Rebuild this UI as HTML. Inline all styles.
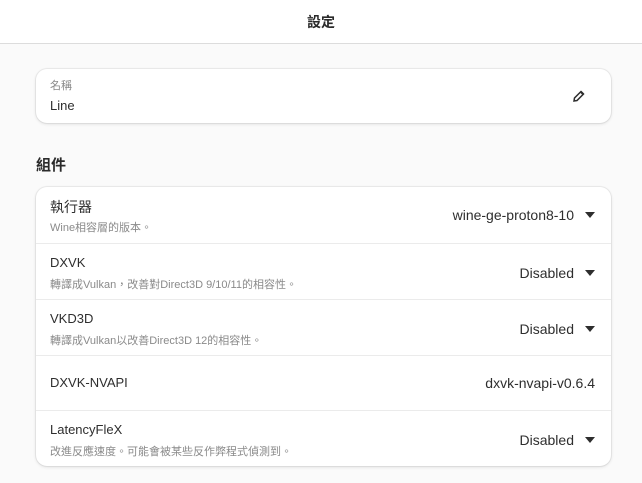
<!DOCTYPE html>
<html><head><meta charset="utf-8"><style>
*{margin:0;padding:0;box-sizing:border-box}
body{width:642px;height:483px;background:#fafafa;font-family:"Liberation Sans","Noto Sans CJK TC",sans-serif;color:#2e2e2e;position:relative;overflow:hidden}
.hdr{position:absolute;left:0;top:0;width:642px;height:44px;background:#fff;border-bottom:1px solid #dcdcdc;text-align:center;line-height:44px;font-size:14px;font-weight:bold;color:#2a2a2a}
.card{position:absolute;left:36px;width:575px;background:#fff;border-radius:11px;box-shadow:0 0 0 1px rgba(0,0,0,.05),0 1px 3px rgba(0,0,0,.12)}
.t{position:absolute;left:14px;white-space:nowrap}
.r{position:absolute;right:16px;white-space:nowrap;font-size:14px}
.sub{font-size:11px;color:#8a8a8a}
.main{font-size:13px}
.row{position:absolute;left:0;width:575px;border-top:1px solid #ebebeb}
.arr{display:inline-block;width:0;height:0;border-left:5px solid transparent;border-right:5px solid transparent;border-top:6px solid #2e2e2e;margin-left:11px;vertical-align:2px}
h2{position:absolute;left:36px;top:154px;font-size:15px;font-weight:bold;color:#2a2a2a}
</style></head><body>
<div class="hdr">設定</div>
<div class="card" style="top:69px;height:54px">
<div class="t sub" style="top:8px">名稱</div>
<div class="t main" style="top:29px">Line</div>
<svg style="position:absolute;left:536px;top:20px" width="14" height="14" viewBox="0 0 14 14"><path d="M2 12 L2.5 9 L9 2.5 L11.5 5 L5 11.5 Z" fill="none" stroke="#2e2e2e" stroke-width="1.5"/><path d="M8 3.5 L10.5 6 L12 4.5 L9.5 2 Z" fill="#2e2e2e"/></svg>
</div>
<h2>組件</h2>
<div class="card" style="top:187px;height:279px">
<div class="row" style="top:0;height:56px;border-top:none">
<div class="t" style="top:10px;font-size:14px">執行器</div>
<div class="t sub" style="top:32px">Wine相容層的版本。</div>
<div class="r" style="top:20px">wine-ge-proton8-10<span class="arr"></span></div></div>
<div class="row" style="top:56px;height:56px">
<div class="t main" style="top:11px">DXVK</div>
<div class="t sub" style="top:32px">轉譯成Vulkan，改善對Direct3D 9/10/11的相容性。</div>
<div class="r" style="top:21px">Disabled<span class="arr"></span></div></div>
<div class="row" style="top:112px;height:56px">
<div class="t main" style="top:11px">VKD3D</div>
<div class="t sub" style="top:32px">轉譯成Vulkan以改善Direct3D 12的相容性。</div>
<div class="r" style="top:21px">Disabled<span class="arr"></span></div></div>
<div class="row" style="top:168px;height:55px">
<div class="t main" style="top:19px">DXVK-NVAPI</div>
<div class="r" style="top:19px">dxvk-nvapi-v0.6.4</div></div>
<div class="row" style="top:223px;height:56px">
<div class="t main" style="top:11px">LatencyFleX</div>
<div class="t sub" style="top:32px">改進反應速度。可能會被某些反作弊程式偵測到。</div>
<div class="r" style="top:21px">Disabled<span class="arr"></span></div></div>
</div>
</body></html>
